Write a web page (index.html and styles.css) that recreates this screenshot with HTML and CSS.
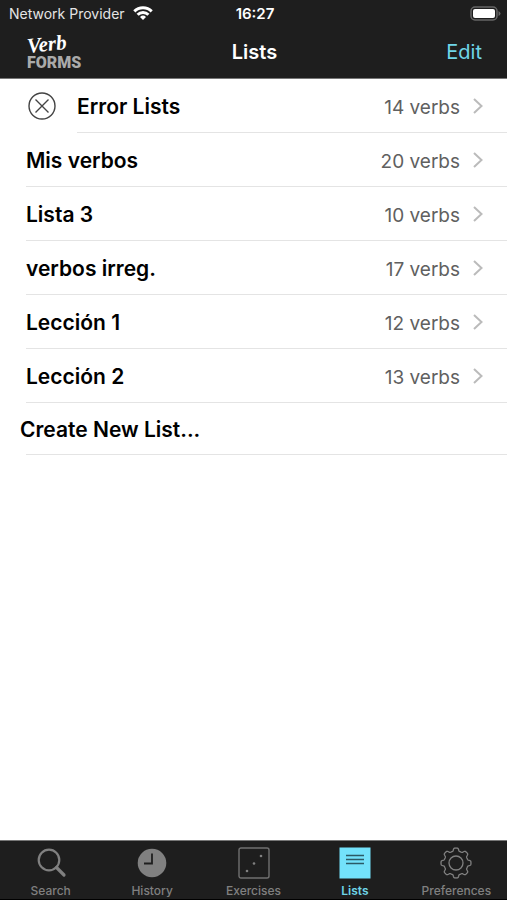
FILE: index.html
```html
<!DOCTYPE html>
<html lang="en">

<head>
    <meta charset="UTF-8">
    <meta name="viewport" content="width=device-width, initial-scale=1.0">
    <title>Lists</title>
    <link rel="stylesheet" href="styles.css">
</head>

<body>
    <header class="header">
        <div class="status-bar">
            <div class="carrier">
                Network Provider
                <svg width="20" height="14" viewBox="0 0 20 14" fill="none" stroke="#fff" stroke-width="3">
                    <path d="M1.3 5.4a12.3 12.3 0 0 1 17.4 0" />
                    <path d="M4.6 8.8a7.6 7.6 0 0 1 10.8 0" />
                    <path d="M10 14l-3-3a4.3 4.3 0 0 1 6 0z" fill="#fff" stroke="none" />
                </svg>
            </div>
            <div class="time">16:27</div>
            <div class="battery">
                <svg width="31" height="15" viewBox="0 0 31 15">
                    <rect x="1" y="1" width="26" height="13" rx="4" fill="#1e1e1e" stroke="#666" stroke-width="1.5" />
                    <rect x="3" y="3" width="22" height="9" rx="2" fill="#fff" />
                    <path d="M28.5 5q2 1 2 2.5t-2 2.5z" fill="#666" />
                </svg>
            </div>
        </div>
        <div class="nav-bar">
            <div class="logo">
                <span class="logo-verb">Verb</span>
                <span class="logo-forms">FORMS</span>
            </div>
            <h1 class="title">Lists</h1>
            <button type="button" class="edit">Edit</button>
        </div>
    </header>

    <main class="lists">
        <a href="#" class="row">
            <svg class="error-icon" width="28" height="28" viewBox="0 0 28 28" fill="none" stroke="#444" stroke-width="1.4">
                <circle cx="14" cy="14" r="13" />
                <path d="M7.5 7.5l13 13M20.5 7.5l-13 13" />
            </svg>
            <div class="row-body">
                <span class="name">Error Lists</span>
                <span class="count">14 verbs</span>
                <svg class="arrow" width="10" height="16" viewBox="0 0 10 16"><path d="M1 1l7.5 7L1 15" /></svg>
            </div>
        </a>
        <a href="#" class="row">
            <div class="row-body">
                <span class="name">Mis verbos</span>
                <span class="count">20 verbs</span>
                <svg class="arrow" width="10" height="16" viewBox="0 0 10 16"><path d="M1 1l7.5 7L1 15" /></svg>
            </div>
        </a>
        <a href="#" class="row">
            <div class="row-body">
                <span class="name">Lista 3</span>
                <span class="count">10 verbs</span>
                <svg class="arrow" width="10" height="16" viewBox="0 0 10 16"><path d="M1 1l7.5 7L1 15" /></svg>
            </div>
        </a>
        <a href="#" class="row">
            <div class="row-body">
                <span class="name">verbos irreg.</span>
                <span class="count">17 verbs</span>
                <svg class="arrow" width="10" height="16" viewBox="0 0 10 16"><path d="M1 1l7.5 7L1 15" /></svg>
            </div>
        </a>
        <a href="#" class="row">
            <div class="row-body">
                <span class="name">Lección 1</span>
                <span class="count">12 verbs</span>
                <svg class="arrow" width="10" height="16" viewBox="0 0 10 16"><path d="M1 1l7.5 7L1 15" /></svg>
            </div>
        </a>
        <a href="#" class="row">
            <div class="row-body">
                <span class="name">Lección 2</span>
                <span class="count">13 verbs</span>
                <svg class="arrow" width="10" height="16" viewBox="0 0 10 16"><path d="M1 1l7.5 7L1 15" /></svg>
            </div>
        </a>
        <button type="button" class="create">Create New List...</button>
    </main>

    <nav class="tab-bar">
        <a href="#" class="tab">
            <svg width="32" height="32" viewBox="0 0 32 32" fill="none" stroke="#808080">
                <circle cx="14" cy="13" r="10.3" stroke-width="2.2" />
                <path d="M21.5 20.5l7.5 7.5" stroke-width="3.2" stroke-linecap="round" />
            </svg>
            Search
        </a>
        <a href="#" class="tab">
            <svg width="32" height="32" viewBox="0 0 32 32" fill="none">
                <circle cx="16" cy="16" r="14.3" fill="#808080" />
                <path d="M16 6.5v10H8" stroke="#1e1e1e" stroke-width="1.8" />
            </svg>
            History
        </a>
        <a href="#" class="tab">
            <svg width="32" height="32" viewBox="0 0 32 32" fill="#808080">
                <rect x="1" y="1" width="30" height="30" rx="2" fill="none" stroke="#707070" stroke-width="1.4" />
                <circle cx="9" cy="24" r="1.3" />
                <circle cx="16" cy="16.5" r="1.3" />
                <circle cx="23" cy="9" r="1.3" />
            </svg>
            Exercises
        </a>
        <a href="#" class="tab active">
            <svg width="32" height="32" viewBox="0 0 32 32">
                <rect x="0.5" y="0.5" width="31" height="31" fill="#73e2fb" />
                <path d="M7 8.5h18M7 12.5h18M7 16.5h18" stroke="#2b5a66" stroke-width="1.5" />
            </svg>
            Lists
        </a>
        <a href="#" class="tab">
            <svg width="32" height="32" viewBox="0 0 32 32" fill="none" stroke="#808080" stroke-width="1.3" stroke-linejoin="round">
                <circle cx="16" cy="16" r="7" />
                <path id="gear" d="" />
            </svg>
            Preferences
        </a>
    </nav>

    <script>
        // outline of the gear, 8 teeth
        let points = [];
        for (let i = 0; i <= 160; i++) {
            let angle = i * Math.PI * 2 / 160;
            let radius = 13.5 + 1.5 * Math.tanh(2.5 * Math.cos(8 * angle));
            points.push((16 + radius * Math.sin(angle)).toFixed(2) + ' ' + (16 - radius * Math.cos(angle)).toFixed(2));
        }
        document.getElementById('gear').setAttribute('d', 'M' + points.join('L') + 'z');
    </script>
</body>

</html>
```
FILE: styles.css
```css
* {
    box-sizing: border-box;
    font-family: Inter, "Liberation Sans", sans-serif;
}

body {
    margin: 0;
    min-height: 100vh;
    display: flex;
    flex-direction: column;
    background: #fff;
}

a {
    text-decoration: none;
}

button {
    border: none;
    background: none;
    padding: 0;
    cursor: pointer;
}

.header {
    background: #1e1e1e;
    color: #fff;
    border-bottom: 1px solid #777;
}

.status-bar,
.nav-bar {
    display: grid;
    grid-template-columns: 1fr auto 1fr;
    align-items: center;
}

.status-bar {
    height: 26px;
    padding: 0 6px 0 9px;
    font-size: 14px;
}

.carrier {
    display: flex;
    align-items: center;
    gap: 8px;
    color: #e4e4e4;
}

.time {
    font-size: 15px;
    font-weight: 600;
}

.battery {
    display: flex;
    justify-content: flex-end;
}

.nav-bar {
    height: 52px;
    padding: 0 25px 0 27px;
}

.logo {
    display: flex;
    flex-direction: column;
    padding-top: 4px;
}

.logo-verb {
    font-family: "Liberation Serif", serif;
    font-size: 21px;
    line-height: 18px;
    font-style: italic;
    font-weight: bold;
    transform: rotate(-6deg);
    transform-origin: left;
}

.logo-forms {
    font-family: Roboto, sans-serif;
    font-size: 16px;
    line-height: 16px;
    font-weight: 900;
    color: #aaa;
}

.title {
    margin: 0;
    font-size: 20px;
    font-weight: 600;
}

.edit {
    justify-self: end;
    font-size: 20px;
    color: #6fd5e8;
}

.lists {
    flex: 1;
}

.row {
    display: flex;
    align-items: center;
    height: 54px;
    padding-left: 26px;
    color: #000;
}

.error-icon {
    margin-left: 2px;
    margin-right: 21px;
}

.row-body {
    flex: 1;
    height: 100%;
    display: flex;
    align-items: center;
    padding-right: 24px;
    border-bottom: 1px solid #e4e4e4;
}

.name {
    flex: 1;
    padding-top: 2px;
    font-size: 21px;
    font-weight: 600;
}

.count {
    padding-top: 4px;
    font-size: 19px;
    color: #606060;
}

.arrow {
    margin-left: 13px;
    fill: none;
    stroke: #bbb;
    stroke-width: 2;
}

.create {
    display: block;
    width: 100%;
    height: 52px;
    padding-left: 20px;
    text-align: left;
    font-size: 21px;
    font-weight: 600;
    color: #000;
    /* the line starts where the names start, not at the button text */
    background: linear-gradient(#e4e4e4, #e4e4e4) 26px 100% / 100% 1px no-repeat;
}

.tab-bar {
    display: flex;
    height: 60px;
    background: #1e1e1e;
    border-top: 1px solid #777;
    border-bottom: 1px solid #000;
}

.tab {
    flex: 1;
    display: flex;
    flex-direction: column;
    align-items: center;
    gap: 4px;
    padding-top: 6px;
    font-size: 12px;
    line-height: 16px;
    font-weight: 500;
    color: #808080;
}

.active {
    font-weight: 600;
    color: #6fd5e8;
}
```
